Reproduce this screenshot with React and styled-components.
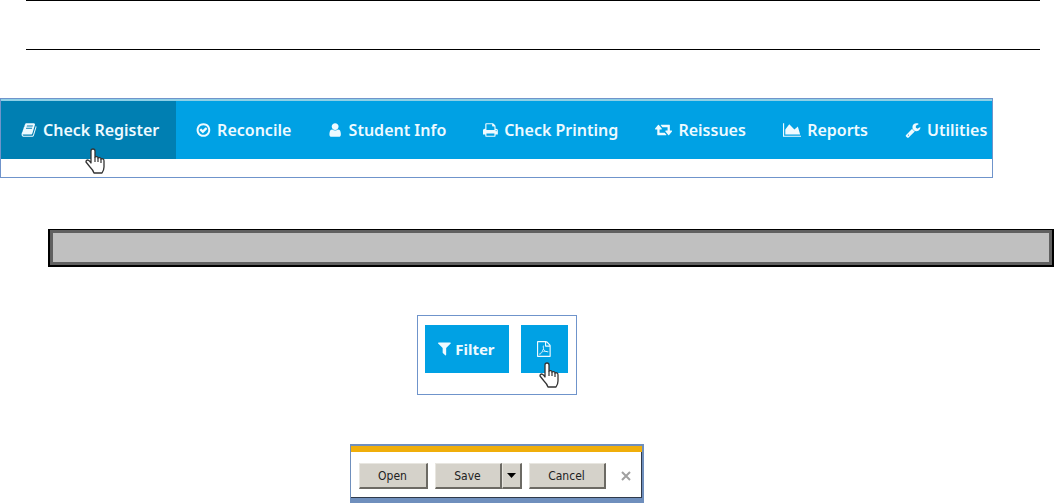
import React from 'react';
import styled, { createGlobalStyle } from 'styled-components';

// CSS starts
const GlobalStyle = createGlobalStyle`
    * {
      box-sizing: border-box;
    }
    body {
      margin: 0;
      background-color: #ffffff;
      font-family: "Noto Sans", sans-serif;
    }
`;

const StyledHeader = styled.header`
      height: 50px;
      margin: 0 14px 48px 26px;
      border-top: 1px solid #000000;
      border-bottom: 1px solid #000000;
`;

const StyledFigure = styled.div`
      margin-right: 61px;
      display: flex;
      justify-content: center;
`;

const StyledNavFrame = styled.div`
      flex: 1;
      min-width: 0;
      border: 1px solid #6f94cb;
      padding-bottom: 18px;
`;

const StyledNav = styled.nav`
      display: flex;
      height: 60px;
      border-top: 2px solid #8fd0e6;
      background-color: #00a1e4;
`;

const StyledNavLink = styled.a`
      position: relative;
      display: flex;
      flex: none;
      align-items: center;
      gap: 6px;
      padding: 0 17px 0 20px;
      background-color: ${(props) => (props.$active ? '#007fb2' : 'transparent')};
      color: #eefaff;
      font-size: 16px;
      font-weight: 600;
      text-decoration: none;
      white-space: nowrap;

      &:last-child {
        padding-right: 4px;
      }
`;

const StyledIcon = styled.svg`
      flex: none;
      height: ${(props) => props.$height};
      fill: currentColor;
`;

const StyledCursor = styled.svg`
      position: absolute;
      top: ${(props) => props.$top};
      left: ${(props) => props.$left};
      width: 21px;
      height: 26px;
      z-index: 1;
`;

const StyledBar = styled.div`
      height: 38px;
      margin: 51px 0 48px 48px;
      border: solid #000000;
      border-width: 1px 2px 2px;
      background-color: #c0c0c0;
      box-shadow: inset 0 0 0 3px #606060;
`;

const StyledActions = styled.div`
      display: flex;
      gap: 12px;
      padding: 9px 8px 21px 7px;
      border: 1px solid #6f94cb;
`;

const StyledAction = styled.button`
      position: relative;
      display: flex;
      align-items: center;
      justify-content: center;
      gap: 4px;
      width: ${(props) => props.$width};
      height: 48px;
      padding: 0;
      border: 0;
      background-color: #00a1e4;
      color: #eefaff;
      font-family: inherit;
      font-size: 15px;
      font-weight: 700;
`;

const StyledDownload = styled.div`
      display: flex;
      align-items: center;
      gap: 7px;
      margin-top: 49px;
      padding: 17px 11px 9px 8px;
      border: solid #6f8fbd;
      border-width: 2px 2px 5px 1px;
      box-shadow: inset 0 6px #f0ae0a, inset -1px -1px #303a4a;
`;

const StyledSplit = styled.div`
      display: flex;
`;

const StyledDialogButton = styled.button`
      display: flex;
      align-items: center;
      justify-content: center;
      width: ${(props) => props.$width};
      height: 26px;
      padding: 0;
      border: solid;
      border-width: 1px 2px 2px 1px;
      border-color: #e8e6e0 #6c6a64 #6c6a64 #e8e6e0;
      background-color: #d5d2ca;
      color: #222222;
      font-family: "DejaVu Sans Condensed", "DejaVu Sans", sans-serif;
      font-size: 12px;
`;

const StyledClose = styled.button`
      display: flex;
      margin-left: 8px;
      padding: 0;
      border: 0;
      background: none;
`;
// CSS ends

const icons = {
    book: {
        box: '0 0 1792 1792',
        path: 'M1703 478q40 57 18 129l-275 906q-19 64-76.500 107.500t-122.500 43.500h-923q-77 0-148.500-53.500t-99.500-131.500q-24-67-2-127 0-4 3-27t4-37q1-8-3-21.500t-3-19.500q2-11 8-21t16.500-23.500 16.500-23.500q23-38 45-91.500t30-91.500q3-10 .5-30t-.5-28q3-11 17-28t17-23q21-36 42-92t25-90q1-9-2.500-32t.5-28q4-13 22-30.500t22-22.500q19-26 42.500-84.500t27.500-96.500q1-8-3-25.500t-2-26.500q2-8 9-18t18-23 17-21q8-12 16.500-30.500t15-35 16-36 19.500-32 26.500-23.500 36-11.500 47.500 5.500l-1 3q38-9 51-9h761q74 0 114 56t18 130l-274 906q-36 119-71.500 153.500t-128.500 34.500h-869q-27 0-38 15-11 16-1 43 24 70 144 70h923q29 0 56-15.500t35-41.500l300-987q7-22 5-57 38 15 59 43zm-1064 2q-4 13 2 22.500t20 9.500h608q13 0 25.500-9.500t16.500-22.500l21-64q4-13-2-22.500t-20-9.500h-608q-13 0-25.500 9.500t-16.500 22.500zm-83 256q-4 13 2 22.500t20 9.500h608q13 0 25.500-9.500t16.500-22.500l21-64q4-13-2-22.500t-20-9.500h-608q-13 0-25.500 9.500t-16.500 22.500z',
    },
    check: {
        box: '64 0 1664 1792',
        path: 'M1299 813l-422 422q-19 19-45 19t-45-19l-294-294q-19-19-19-45t19-45l102-102q19-19 45-19t45 19l147 147 275-275q19-19 45-19t45 19l102 102q19 19 19 45t-19 45zm141 83q0-148-73-273t-198-198-273-73-273 73-198 198-73 273 73 273 198 198 273 73 273-73 198-198 73-273zm224 0q0 209-103 385.500t-279.500 279.500-385.500 103-385.500-103-279.500-279.500-103-385.500 103-385.500 279.500-279.500 385.500-103 385.500 103 279.500 279.500 103 385.500z',
    },
    user: {
        box: '96 0 1600 1792',
        path: 'M1536 1399q0 109-62.500 187t-150.500 78h-854q-88 0-150.500-78t-62.500-187q0-85 8.500-160.500t31.500-152 58.500-131 94-89 134.500-34.500q131 128 313 128t313-128q76 0 134.500 34.500t94 89 58.500 131 31.500 152 8.500 160.500zm-256-887q0 159-112.500 271.500t-271.500 112.500-271.500-112.500-112.500-271.500 112.500-271.500 271.500-112.500 271.500 112.500 112.500 271.500z',
    },
    print: {
        box: '64 0 1664 1792',
        path: 'M448 1536h896v-256h-896v256zm0-640h896v-384h-160q-40 0-68-28t-28-68v-160h-640v640zm1152 64q0-26-19-45t-45-19-45 19-19 45 19 45 45 19 45-19 19-45zm128 0v416q0 13-9.500 22.500t-22.500 9.500h-224v160q0 40-28 68t-68 28h-960q-40 0-68-28t-28-68v-160h-224q-13 0-22.500-9.500t-9.500-22.500v-416q0-79 56.500-135.500t135.500-56.500h64v-544q0-40 28-68t68-28h672q40 0 88 20t76 48l152 152q28 28 48 76t20 88v256h64q79 0 135.500 56.500t56.500 135.500z',
    },
    retweet: {
        box: '-64 128 1920 1792',
        path: 'M1216 1568q0 13-9.500 22.500t-22.500 9.500h-960q-8 0-13.500-2t-9-7-5.500-8-3-11.500-1-11.500v-600h-192q-26 0-45-19t-19-45q0-24 15-41l320-384q19-22 49-22t49 22l320 384q15 17 15 41 0 26-19 45t-45 19h-192v384h576q16 0 25 11l160 192q7 10 7 21zm640-416q0 24-15 41l-320 384q-20 23-49 23t-49-23l-320-384q-15-17-15-41 0-26 19-45t45-19h192v-384h-576q-16 0-25-12l-160-192q-7-9-7-20 0-13 9.500-22.500t22.500-9.500h960q8 0 13.500 2t9 7 5.500 8 3 11.500 1 11.500v600h192q26 0 45 19t19 45z',
    },
    chart: {
        box: '0 0 2048 1792',
        path: 'M2048 1536v128h-2048v-1536h128v1408h1920zm-384-1024l256 896h-1664v-576l448-576 576 576z',
    },
    wrench: {
        box: '0 0 1792 1792',
        path: 'M448 1472q0-26-19-45t-45-19-45 19-19 45 19 45 45 19 45-19 19-45zm644-420l-682 682q-37 37-90 37-52 0-91-37l-106-108q-38-36-38-90 0-53 38-91l681-681q39 98 114.500 173.500t173.500 114.500zm634-435q0 39-23 106-47 134-164.500 217.500t-258.500 83.500q-185 0-316.500-131.500t-131.500-316.500 131.500-316.500 316.500-131.500q58 0 121.500 16.500t107.500 46.500q16 11 16 28t-16 28l-293 169v224l193 107q5-3 79-48.500t135.500-81 70.500-35.500q15 0 23.500 10t8.500 25z',
    },
    filter: {
        box: '192 192 1408 1536',
        path: 'M1595 295q17 41-14 70l-493 493v742q0 42-39 59-13 5-25 5-27 0-45-19l-256-256q-19-19-19-45v-486l-493-493q-31-29-14-70 17-39 59-39h1280q42 0 59 39z',
    },
    pdf: {
        box: '128 0 1536 1792',
        path: 'M1596 380q28 28 48 76t20 88v1152q0 40-28 68t-68 28h-1344q-40 0-68-28t-28-68v-1600q0-40 28-68t68-28h896q40 0 88 20t76 48zm-444-244v376h376q-10-29-22-41l-313-313q-12-12-41-22zm384 1528v-1024h-416q-40 0-68-28t-28-68v-416h-768v1536h1280zm-514-593q33 26 84 56 59-7 117-7 147 0 177 49 16 22 2 52 0 1-1 2l-2 2v1q-6 38-71 38-48 0-115-20t-130-53q-221 24-392 83-153 262-242 262-15 0-28-7l-24-12q-1-1-6-5-10-10-6-36 9-40 56-91.500t132-96.500q14-9 23 6 2 2 2 4 52-85 107-197 68-136 104-262-24-82-30.500-159.500t6.500-127.500q11-40 42-40h22q23 0 35 15 18 21 9 68-2 6-4 8 1 3 1 8v30q-2 123-14 192 55 164 146 238zm-576 411q52-24 137-158-51 40-87.500 84t-49.500 74zm398-920q-15 42-2 132 1-7 7-44 0-3 7-43 1-4 4-8-1-1-1-2t-1-2-1-3q-1-22-13-36 0 1-1 2v2zm-124 661q135-54 284-81-2-1-13-9.500t-16-13.500q-76-67-127-176-27 86-83 197-30 56-45 83zm646-16q-24-24-140-24 76 28 124 28 14 0 18-1 0-1-2-3z',
    },
};

const menu = [
    { label: 'Check Register', icon: 'book', active: true },
    { label: 'Reconcile', icon: 'check' },
    { label: 'Student Info', icon: 'user' },
    { label: 'Check Printing', icon: 'print' },
    { label: 'Reissues', icon: 'retweet' },
    { label: 'Reports', icon: 'chart' },
    { label: 'Utilities', icon: 'wrench' },
];

const Icon = ({ name, height = '16px' }) => (
    <StyledIcon $height={height} viewBox={icons[name].box} aria-hidden="true">
        <path d={icons[name].path} />
    </StyledIcon>
);

const HandCursor = ({ top, left }) => (
    <StyledCursor $top={top} $left={left} viewBox="0 0 21 26" aria-hidden="true">
        <path
            d="M6 14V3q0-2 2-2t2 2v6q3-1 3 1 3-1 3 1 3-1 3 2v6q0 3-2 6H9q-1-3-4-6l-4-5q0-2 2-2 2 1 3 3z"
            fill="#ffffff"
            stroke="#333333"
            strokeWidth="1.3"
            strokeLinejoin="round"
        />
        <path d="M10 9v5M13 10v4M16 11v4" fill="none" stroke="#333333" strokeWidth="1.2" />
    </StyledCursor>
);

const App = () => {
    const links = menu.map(item => (
        <StyledNavLink key={item.label} href="#" $active={item.active}>
            <Icon name={item.icon} />
            {item.label}
            {item.active && <HandCursor top="47px" left="84px" />}
        </StyledNavLink>
    ));

    return (
        <>
            <GlobalStyle />
            <StyledHeader />
            <main>
                <StyledFigure>
                    <StyledNavFrame>
                        <StyledNav>{links}</StyledNav>
                    </StyledNavFrame>
                </StyledFigure>
                <StyledBar />
                <StyledFigure>
                    <StyledActions>
                        <StyledAction type="button" $width="84px">
                            <Icon name="filter" height="14px" />
                            Filter
                        </StyledAction>
                        <StyledAction type="button" $width="47px" aria-label="PDF">
                            <Icon name="pdf" />
                            <HandCursor top="37px" left="18px" />
                        </StyledAction>
                    </StyledActions>
                </StyledFigure>
                <StyledFigure>
                    <StyledDownload>
                        <StyledDialogButton type="button" $width="69px">Open</StyledDialogButton>
                        <StyledSplit>
                            <StyledDialogButton type="button" $width="67px">Save</StyledDialogButton>
                            <StyledDialogButton type="button" $width="20px" aria-label="Save options">
                                <svg width="9" height="5" viewBox="0 0 9 5"><path d="M0 0h9L4.500 5z" /></svg>
                            </StyledDialogButton>
                        </StyledSplit>
                        <StyledDialogButton type="button" $width="77px">Cancel</StyledDialogButton>
                        <StyledClose type="button" aria-label="Close">
                            <svg width="10" height="10" viewBox="0 0 10 10">
                                <path d="M1 1l8 8M9 1L1 9" stroke="#a0a0a0" strokeWidth="2" />
                            </svg>
                        </StyledClose>
                    </StyledDownload>
                </StyledFigure>
            </main>
        </>
    );
};

export default App;
